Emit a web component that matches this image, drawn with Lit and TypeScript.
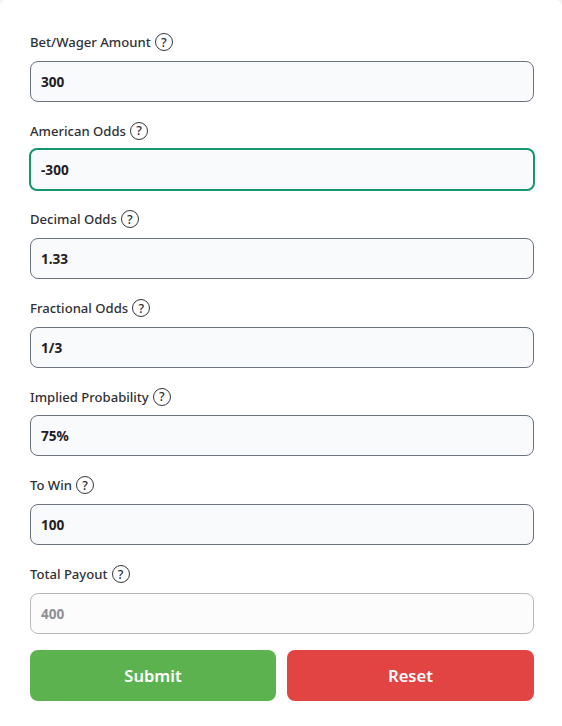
import { LitElement, html, css } from "lit";
import { customElement } from "lit/decorators.js";

const rows = [
  { label: "Bet/Wager Amount", value: "300" },
  { label: "American Odds", value: "-300", focus: true },
  { label: "Decimal Odds", value: "1.33" },
  { label: "Fractional Odds", value: "1/3" },
  { label: "Implied Probability", value: "75%" },
  { label: "To Win", value: "100" },
  { label: "Total Payout", value: "400", disabled: true },
];

@customElement("app-root")
export class AppRoot extends LitElement {
  static styles = css`
    :host { display: block; background: #f3f3f3; font-family: "Noto Sans", "Open Sans", sans-serif; }
    .form { box-sizing: border-box; width: 562px; height: 726px; padding: 31.7px 28px 0 30px; display: flex; flex-direction: column; background: #fff; border-radius: 6px 6px 0 0; }
    .field { display: flex; flex-direction: column; height: 88.67px; }
    .label { display: flex; align-items: center; gap: 4px; height: 20px; margin: 0.4px 0 8.6px; font-size: 13.1px; font-weight: 500; color: #2f3136; }
    .help { box-sizing: border-box; width: 18px; height: 18px; border: 1px solid #33363c; border-radius: 50%; display: flex; align-items: center; justify-content: center; font-size: 12.5px; font-weight: 500; color: #2b2e33; }
    .input { box-sizing: border-box; height: 41px; width: 504px; border: 1px solid #6b7280; border-radius: 8px; background: #f9fafb; padding: 0 10px; display: flex; align-items: center; font-size: 13.6px; font-weight: 700; color: #1f2023; }
    .input.focus { border: 2px solid #15966f; height: 43px; width: 506px; margin: -1px -1px 0; padding: 0 10px; }
    .focus-wrap { height: 41px; }
    .input.disabled { border-color: #b9babd; background: #fcfcfc; color: #8f9094; }
    .buttons { display: grid; grid-template-columns: 246px 247px; gap: 11px; margin-top: -2.4px; }
    .btn { height: 51px; border-radius: 8px; display: flex; align-items: center; justify-content: center; color: #fff; font-size: 16.6px; font-weight: 600; }
    .submit { background: #5cb24f; }
    .reset { background: #e24343; }
  `;

  render() {
    return html`<div class="form">
      ${rows.map((r) => html`<div class="field">
        <div class="label">${r.label}<span class="help">?</span></div>
        <div class="focus-wrap"><div class="input ${r.focus ? "focus" : ""} ${r.disabled ? "disabled" : ""}">${r.value}</div></div>
      </div>`)}
      <div class="buttons">
        <div class="btn submit">Submit</div>
        <div class="btn reset">Reset</div>
      </div>
    </div>`;
  }
}
